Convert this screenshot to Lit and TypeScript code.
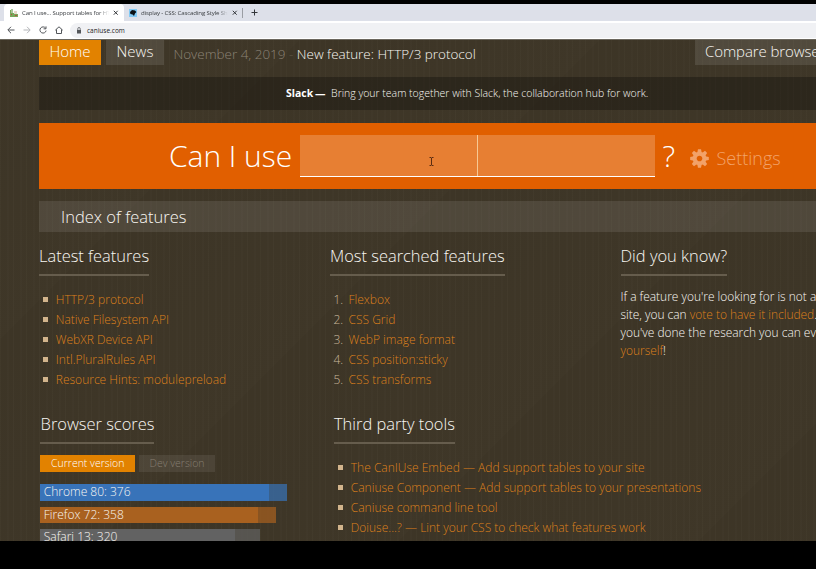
import { LitElement, html, css, svg } from "lit";
import { customElement } from "lit/decorators.js";

const latest = ["HTTP/3 protocol", "Native Filesystem API", "WebXR Device API", "Intl.PluralRules API", "Resource Hints: modulepreload"];
const searched = ["Flexbox", "CSS Grid", "WebP image format", "CSS position:sticky", "CSS transforms"];
const tools = [
  "The CanIUse Embed — Add support tables to your site",
  "Caniuse Component — Add support tables to your presentations",
  "Caniuse command line tool",
  "Doiuse...? — Lint your CSS to check what features work",
];
const scores = [
  { label: "Chrome 80: 376", solid: 228.5, full: 246.5, color: "#3873b9" },
  { label: "Firefox 72: 358", solid: 217.5, full: 236, color: "#a9611f" },
  { label: "Safari 13: 320", solid: 194.5, full: 220, color: "#626262" },
];
const teeth = [0, 45, 90, 135, 180, 225, 270, 315];

@customElement("browser-chrome")
export class BrowserChrome extends LitElement {
  static styles = css`
    :host { display: block; height: 35px; background: #dde0e9; font: 6.1px/16px "Open Sans", sans-serif; color: #3d4044; }
    * { box-sizing: border-box; }
    svg { display: block; flex: none; }
    .tabs { display: flex; height: 17px; padding-left: 4px; align-items: stretch; }
    .tab { display: flex; align-items: center; height: 17px; width: 120px; padding: 0 5px 0 6px; }
    .active { background: #fff; border-radius: 4px 4px 0 0; }
    .title { width: 87px; margin: 0 4px 0 4px; letter-spacing: -.14px; white-space: nowrap; overflow: hidden; -webkit-mask-image: linear-gradient(90deg, #000 88%, transparent); mask-image: linear-gradient(90deg, #000 88%, transparent); }
    .second { padding-left: 5px; }
    .sep { width: 1px; height: 10px; margin: 4px 8px 0 -2px; background: #9a9da3; }
    .new { margin-top: 5px; }
    .bar { display: flex; align-items: center; height: 18px; background: #fff; padding-left: 7px; }
    .nav { display: flex; gap: 8px; width: 63px; }
    .address { display: flex; align-items: center; flex: 1; height: 15px; padding-left: 6px; border-radius: 8px 0 0 8px; background: #f0f1f4; color: #222; line-height: 15px; }
    .url { margin-left: 5px; font-size: 6.5px; }
  `;
  render() {
    const x = svg`<path d="M.8.8 4.7 4.7M4.7.8.8 4.7" stroke="#33363a" stroke-width="1" fill="none"/>`;
    return html`
      <div class="tabs">
        <div class="tab active">
          <svg width="8" height="8" viewBox="0 0 8 8"><path d="M0 1h2v3h3v1h3v3H0z" fill="#78a85c"/><path d="M1 0h2v4H1z" fill="#a8c69a"/><path d="M4 2h3v3H4z" fill="#e6d9ca"/><path d="M1 5h1v1H1zM5 6h2v1H5z" fill="#b9503c"/></svg>
          <span class="title">Can I use... Support tables for HT</span>
          <svg width="5.5" height="5.5">${x}</svg>
        </div>
        <div class="tab second">
          <svg width="8" height="8" viewBox="0 0 8 8"><path d="M0 0h8v8H0z" fill="#83caf5"/><path d="M1 3 3 1l3 .4L7.4 3 6 4.6 5 7 3.6 5.4 1.4 5z" fill="#0b1014"/></svg>
          <span class="title">display - CSS: Cascading Style Sh</span>
          <svg width="5.5" height="5.5">${x}</svg>
        </div>
        <div class="sep"></div>
        <svg class="new" width="7" height="7"><path d="M3.5.5v6M.5 3.5h6" stroke="#33363a"/></svg>
      </div>
      <div class="bar">
        <div class="nav">
          <svg width="8" height="8" viewBox="0 0 8 8" fill="none" stroke="#53565a"><path d="M7.5 4H1M4 .8.8 4 4 7.2"/></svg>
          <svg width="8" height="8" viewBox="0 0 8 8" fill="none" stroke="#b4b6b9"><path d="M.5 4H7M4 .8 7.2 4 4 7.2"/></svg>
          <svg width="8" height="8" viewBox="0 0 8 8" fill="none" stroke="#53565a"><path d="M6.6 2.2A3.1 3.1 0 1 0 7.1 4.6M7 .4v2.4H4.6"/></svg>
          <svg width="8" height="8" viewBox="0 0 8 8" fill="none" stroke="#53565a"><path d="M.3 4.2 4 .8l3.7 3.4M1.5 3.4v4.1h5V3.4"/></svg>
        </div>
        <div class="address">
          <svg width="6" height="7" viewBox="0 0 6 7"><path d="M1 3h4v3.5H1z" fill="#53565a"/><path d="M1.8 3V1.7a1.2 1.2 0 0 1 2.4 0V3" fill="none" stroke="#53565a" stroke-width=".8"/></svg>
          <span class="url">caniuse.com</span>
        </div>
      </div>`;
  }
}

@customElement("app-root")
export class AppRoot extends LitElement {
  static styles = css`
    :host { display: block; width: 816px; height: 569px; overflow: hidden; background: #000; padding: 4px 0 28px; box-sizing: border-box; }
    * { box-sizing: border-box; }
    .page {
      height: 502px; overflow: hidden; padding-left: 39px; border-top: 1px solid #6b675d;
      font: 300 12px/20px "Open Sans", sans-serif; color: #f9f7f3; white-space: nowrap;
      background:
        repeating-linear-gradient(90deg, rgba(255,255,230,.018) 0 1px, transparent 1px 7px, rgba(255,255,230,.01) 7px 9px, transparent 9px 13px),
        repeating-linear-gradient(135deg, rgba(0,0,0,.02) 0, rgba(255,255,255,.004) 212.13px),
        #3e3627;
    }
    .top { display: flex; height: 37px; align-items: flex-start; }
    .top > * { flex: none; }
    .btn { height: 25px; line-height: 23px; font-size: 15px; background: rgba(255,255,255,.1); }
    .home { width: 62px; padding-left: 10.5px; background: #e28200; color: #fff; }
    .news { width: 58px; padding-left: 10.5px; margin-left: 5px; }
    .note { margin-left: 9.5px; font-size: 13.46px; line-height: 29px; width: 521.5px; color: #8b8376; }
    .dash { color: #5e5647; }
    .note b { font-weight: 300; color: #f9f7f3; }
    .compare { width: 140px; padding-left: 10px; font-size: 15px; letter-spacing: -.1px; }
    .slack { height: 33px; margin-bottom: 13px; padding-left: 247px; background: rgba(0,0,0,.28); font-size: 10.47px; line-height: 33px; }
    .slack b { font-weight: 700; color: #fff; margin-right: 3px; word-spacing: -1px; }
    .search { display: flex; height: 66px; padding: 12px 0 0 130px; margin-bottom: 12px; background: #e15f00; line-height: 42px; color: #fff; }
    .can { width: 131px; font-size: 29.9px; line-height: 41px; }
    .field { display: flex; width: 355px; height: 42px; border-bottom: 1px solid #fff; background: rgba(255,255,255,.2); }
    .left { display: flex; align-items: center; width: 178px; padding: 12px 0 0 129px; border-right: 1px solid rgba(255,240,200,.65); }
    .q { width: 35px; padding-left: 7.5px; font-size: 29.9px; line-height: 41px; }
    .gear { width: 19px; height: 19px; margin-top: 14px; }
    .settings { margin-left: 7.5px; font-size: 18px; line-height: 46px; color: #f2a269; }
    .index { height: 31px; margin-bottom: 12px; padding-left: 22px; background: rgba(255,255,255,.095); font-size: 16.5px; line-height: 32px; }
    .row { display: grid; grid-template-columns: 291px 290.5px 300px; height: 168px; }
    h2 { width: max-content; height: 32px; margin: 0 0 13px; border-bottom: 2px solid #665d4d; font-size: 16.45px; font-weight: 300; line-height: 23px; }
    ul, ol { margin: 0; padding: 0; list-style: none; }
    li { display: flex; align-items: center; height: 20px; color: #dd801c; line-height: 21px; }
    ul li::before { content: ""; width: 5px; height: 5px; margin: 0 7.8px 0 4px; background: #d2b48c; }
    .num { width: 18.5px; padding-left: 3.5px; color: #c9b79c; }
    .tip { margin: 0; font-size: 11.95px; line-height: 18px; }
    .tip a { color: #dd801c; }
    .know h2 { margin-bottom: 12px; }
    .lower { grid-template-columns: 294px 400px; padding-left: 1px; }
    .lower h2 { line-height: 24px; }
    .lower .scores h2 { margin-bottom: 11px; text-indent: .6px; }
    .lower li:first-child { margin-top: 1px; }
    .modes { display: flex; gap: 4px; margin: 0 0 12px; font-size: 10.5px; line-height: 16px; }
    .mode { height: 17px; width: 95px; padding-left: 11px; background: #e28200; color: #fff; }
    .dev { width: 76px; padding-left: 10.5px; background: rgba(255,255,255,.08); color: #857d70; }
    .score { display: flex; position: relative; height: 16.5px; margin-bottom: 6px; }
    .rest { opacity: .7; }
    .label { position: absolute; left: 3.8px; top: 0; line-height: 16px; font-size: 12px; }
  `;
  render() {
    return html`
      <browser-chrome></browser-chrome>
      <div class="page">
        <div class="top">
          <div class="btn home">Home</div>
          <div class="btn news">News</div>
          <div class="note">November 4, 2019 <span class="dash">-</span> <b>New feature: HTTP/3 protocol</b></div>
          <div class="btn compare">Compare browsers</div>
        </div>
        <div class="slack"><b>Slack —</b> Bring your team together with Slack, the collaboration hub for work.</div>
        <div class="search">
          <div class="can">Can I use</div>
          <div class="field">
            <div class="left">
              <svg width="5" height="9" viewBox="0 0 5 9" fill="none" stroke="#5b2c12"><path d="M.5.5h1.5l.5.5.5-.5h1.5M2.5 1v7M.5 8.5h1.5l.5-.5.5.5h1.5"/></svg>
            </div>
          </div>
          <div class="q">?</div>
          <svg class="gear" viewBox="-10 -10 20 20">
            ${teeth.map((a) => svg`<path d="M-2.3-6 -1.6-9.8H1.6L2.3-6z" fill="#f2a269" transform="rotate(${a})"/>`)}
            <circle r="5.1" fill="none" stroke="#f2a269" stroke-width="4.2"/>
          </svg>
          <div class="settings">Settings</div>
        </div>
        <div class="index">Index of features</div>
        <div class="row">
          <div>
            <h2>Latest features</h2>
            <ul>${latest.map((t) => html`<li>${t}</li>`)}</ul>
          </div>
          <div>
            <h2>Most searched features</h2>
            <ol>${searched.map((t, i) => html`<li><span class="num">${i + 1}.</span>${t}</li>`)}</ol>
          </div>
          <div class="know">
            <h2>Did you know?</h2>
            <p class="tip">If a feature you're looking for is not a<br>site, you can <a>vote to have it included</a>.<br>you've done the research you can ev<br><a>yourself</a>!</p>
          </div>
        </div>
        <div class="row lower">
          <div class="scores">
            <h2>Browser scores</h2>
            <div class="modes"><div class="mode">Current version</div><div class="mode dev">Dev version</div></div>
            ${scores.map((s) => html`<div class="score">
              <div style="width:${s.solid}px;background:${s.color}"></div>
              <div class="rest" style="width:${s.full - s.solid}px;background:${s.color}"></div>
              <span class="label">${s.label}</span>
            </div>`)}
          </div>
          <div>
            <h2>Third party tools</h2>
            <ul>${tools.map((t) => html`<li>${t}</li>`)}</ul>
          </div>
        </div>
      </div>`;
  }
}
